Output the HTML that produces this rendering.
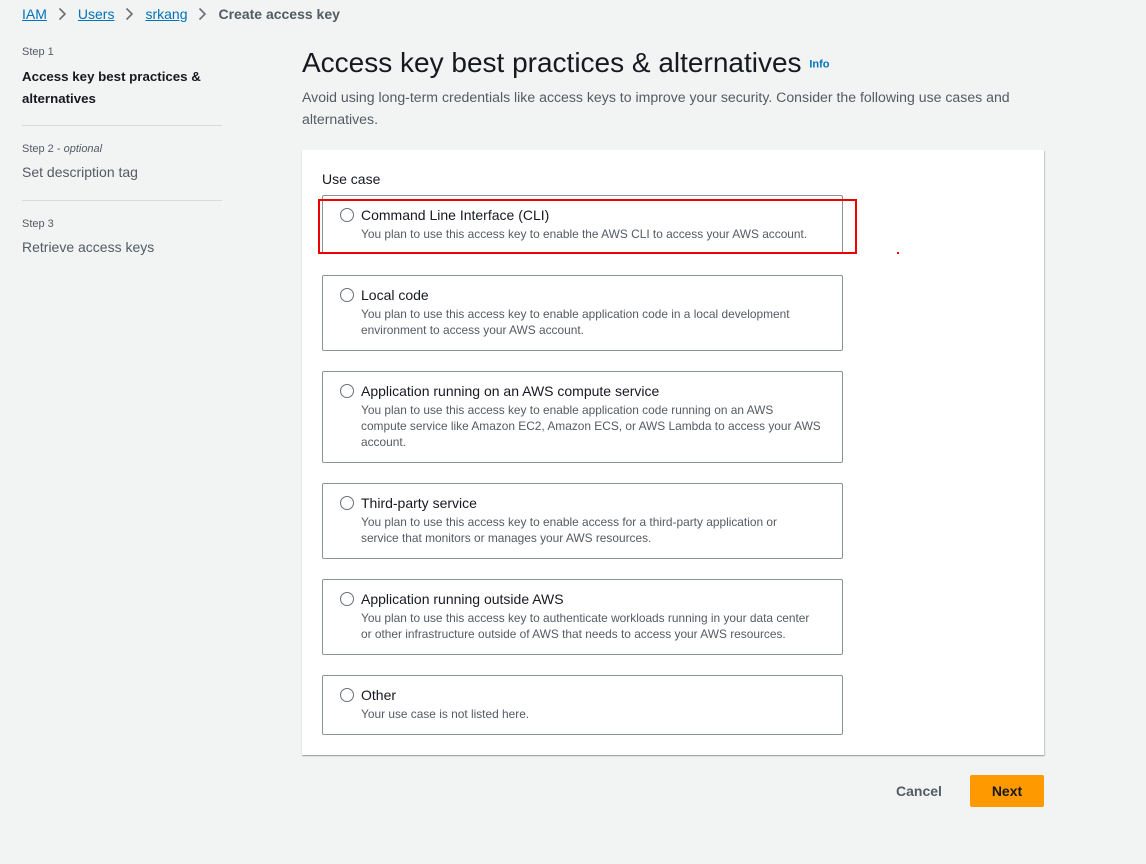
<!DOCTYPE html>
<html><head><meta charset="utf-8"><style>
*{box-sizing:border-box;margin:0;padding:0}
body{width:1146px;height:864px;background:#f2f3f3;font-family:"Liberation Sans",sans-serif;color:#16191f;position:relative;overflow:hidden}
.a{position:absolute;white-space:nowrap}
.bc{top:5px;font-size:14px;line-height:18px}
.bc a{color:#0073bb;text-decoration:underline}
.chev{display:inline-block;vertical-align:-2px;margin:0 11px}
.step{font-size:11px;color:#545b64}
.hr{position:absolute;left:22px;width:200px;height:1px;background:#d5dbdb}
.panel{position:absolute;left:302px;top:150px;width:742px;height:605px;background:#fff;box-shadow:0 1px 1px rgba(0,28,36,.3),1px 1px 1px rgba(0,28,36,.15)}
.box{position:absolute;left:322px;width:521px;border:1px solid #879596;border-radius:2px;background:#fff}
.rad{position:absolute;left:17px;width:14px;height:14px;border:1.5px solid #687078;border-radius:50%}
.t{position:absolute;left:38px;font-size:14px;line-height:18px}
.d{position:absolute;left:38px;font-size:11.9px;line-height:16px;color:#545b64}
</style></head><body>
<div class="a bc" style="left:22px"><a>IAM</a><svg class="chev" width="9" height="14" viewBox="0 0 9 14"><path d="M1.5 1.5L7 7l-5.5 5.5" fill="none" stroke="#687078" stroke-width="1.6"/></svg><a>Users</a><svg class="chev" width="9" height="14" viewBox="0 0 9 14"><path d="M1.5 1.5L7 7l-5.5 5.5" fill="none" stroke="#687078" stroke-width="1.6"/></svg><a>srkang</a><svg class="chev" width="9" height="14" viewBox="0 0 9 14"><path d="M1.5 1.5L7 7l-5.5 5.5" fill="none" stroke="#687078" stroke-width="1.6"/></svg><span style="color:#545b64;font-weight:bold">Create access key</span></div>
<div class="a step" style="left:22px;top:46px">Step 1</div>
<div class="a" style="left:22px;top:66px;font-size:13.3px;font-weight:bold;line-height:22px">Access key best practices &amp;<br>alternatives</div>
<div class="hr" style="top:125px"></div>
<div class="a step" style="left:22px;top:143px">Step 2 - <i>optional</i></div>
<div class="a" style="left:22px;top:164px;font-size:14px;color:#545b64">Set description tag</div>
<div class="hr" style="top:200px"></div>
<div class="a step" style="left:22px;top:218px">Step 3</div>
<div class="a" style="left:22px;top:239px;font-size:14px;color:#545b64">Retrieve access keys</div>
<div class="a" style="left:302px;top:45px;font-size:28px;line-height:36px">Access key best practices &amp; alternatives <span style="font-size:11px;color:#0073bb;font-weight:bold;vertical-align:middle">Info</span></div>
<div class="a" style="left:302px;top:86px;font-size:14.1px;line-height:22px;color:#545b64">Avoid using long-term credentials like access keys to improve your security. Consider the following use cases and<br>alternatives.</div>
<div class="panel"></div>
<div class="a" style="left:322px;top:171px;font-size:14px">Use case</div>

<div class="box" style="top:195px;height:59px"><div class="rad" style="top:12px"></div><div class="t" style="top:10px">Command Line Interface (CLI)</div><div class="d" style="top:30px">You plan to use this access key to enable the AWS CLI to access your AWS account.</div></div>
<div class="box" style="top:275px;height:76px"><div class="rad" style="top:12px"></div><div class="t" style="top:10px">Local code</div><div class="d" style="top:30px">You plan to use this access key to enable application code in a local development<br>environment to access your AWS account.</div></div>
<div class="box" style="top:371px;height:92px"><div class="rad" style="top:12px"></div><div class="t" style="top:10px">Application running on an AWS compute service</div><div class="d" style="top:30px">You plan to use this access key to enable application code running on an AWS<br>compute service like Amazon EC2, Amazon ECS, or AWS Lambda to access your AWS<br>account.</div></div>
<div class="box" style="top:483px;height:76px"><div class="rad" style="top:12px"></div><div class="t" style="top:10px">Third-party service</div><div class="d" style="top:30px">You plan to use this access key to enable access for a third-party application or<br>service that monitors or manages your AWS resources.</div></div>
<div class="box" style="top:579px;height:76px"><div class="rad" style="top:12px"></div><div class="t" style="top:10px">Application running outside AWS</div><div class="d" style="top:30px">You plan to use this access key to authenticate workloads running in your data center<br>or other infrastructure outside of AWS that needs to access your AWS resources.</div></div>
<div class="box" style="top:675px;height:60px"><div class="rad" style="top:12px"></div><div class="t" style="top:10px">Other</div><div class="d" style="top:30px">Your use case is not listed here.</div></div>

<div class="a" style="left:318px;top:199px;width:539px;height:55px;border:2px solid #e00"></div>
<div class="a" style="left:897px;top:252px;width:2px;height:2px;background:#e00"></div>

<div class="a" style="left:896px;top:783px;font-size:14px;font-weight:bold;color:#545b64">Cancel</div>
<div class="a" style="left:970px;top:775px;width:74px;height:32px;background:#ff9900;border-radius:2px;font-size:14px;font-weight:bold;text-align:center;line-height:32px">Next</div>
</body></html>
